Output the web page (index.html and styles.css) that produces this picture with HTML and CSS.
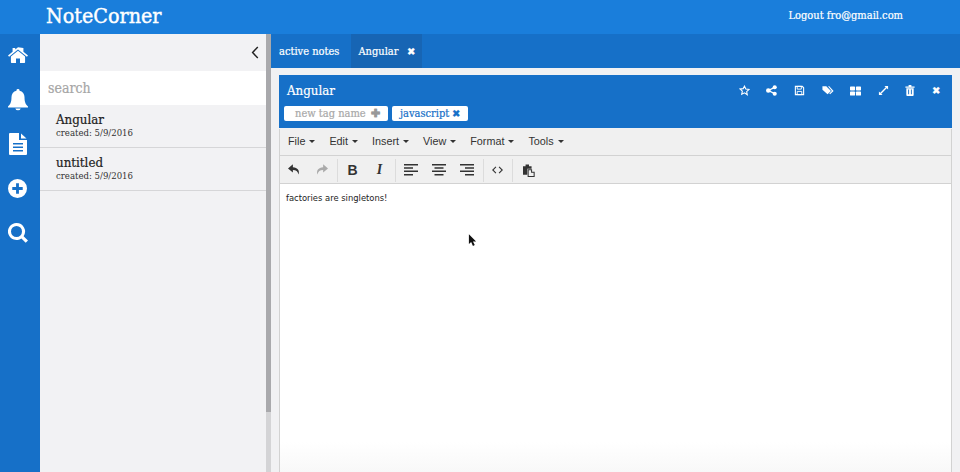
FILE: index.html
```html
<!DOCTYPE html>
<html lang="en">
<head>
    <meta charset="UTF-8" />
    <title>NoteCorner</title>
    <link rel="stylesheet" href="styles.css">
</head>
<body>
    <header class="topbar">
        <h1 class="brand">NoteCorner</h1>
        <div class="account">Logout fro@gmail.com</div>
    </header>

    <div class="main">
        <nav class="sidenav">
            <span class="nav-slot"><svg viewBox="0 0 24 20" width="20" height="17"><path d="M12 4.200 3.500 11.200V18.200c0 .5.400.8.800.8H9.600v-5.400h4.800V19h5.300c.4 0 .8-.3.800-.8V11.200z"/><path d="M12 0 8.700 2.700V.9H5.500v4.500L0 10l1.300 1.500L12 2.700l10.700 8.800L24 10l-5.500-4.600V.9h-.1z"/></svg></span>
            <span class="nav-slot"><svg viewBox="0 0 20 22" width="20" height="22"><path d="M10 0a1.500 1.500 0 0 0-1.500 1.700C5.300 2.400 3.500 5 3.500 8c0 6-1.500 7.500-3.500 9.500V18.500h20v-1C18 15.500 16.500 14 16.500 8c0-3-1.800-5.600-5-6.300A1.500 1.500 0 0 0 10 0z"/><path d="M7.300 19.500a2.800 2.500 0 0 0 5.400 0z"/></svg></span>
            <span class="nav-slot"><svg viewBox="0 0 18 22" width="18" height="22"><path fill-rule="evenodd" d="M1 0h9v7h8v14a1 1 0 0 1-1 1H1a1 1 0 0 1-1-1V1a1 1 0 0 1 1-1zM4 10v1.500h10V10zM4 13.500V15h10v-1.500zM4 17v1.500h10V17z"/><path d="M12 0.500 17.500 5.500H12z"/></svg></span>
            <span class="nav-slot"><svg viewBox="0 0 20 20" width="19" height="19"><path fill-rule="evenodd" d="M10 0a10 10 0 1 0 0 20a10 10 0 0 0 0-20zM8.500 4.500h3v4h4v3h-4v4h-3v-4h-4v-3h4z"/></svg></span>
            <span class="nav-slot"><svg viewBox="0 0 20 20" width="20" height="20"><path fill-rule="evenodd" d="M8.500 0a8.500 8.500 0 1 0 4.900 15.400L17.700 19.800 20 17.500l-4.400-4.300A8.500 8.500 0 0 0 8.500 0zM8.500 3a5.500 5.500 0 1 1 0 11a5.500 5.500 0 0 1 0-11z"/></svg></span>
        </nav>

        <aside class="notes-panel">
            <div class="panel-head">
                <svg viewBox="0 0 10 16" width="8" height="13"><path d="M8.500 1 2 8l6.500 7" fill="none" stroke="#222" stroke-width="1.800"/></svg>
            </div>
            <div class="search">search</div>
            <div class="note-item">
                <div class="note-title">Angular</div>
                <div class="note-date">created: 5/9/2016</div>
            </div>
            <div class="note-item">
                <div class="note-title">untitled</div>
                <div class="note-date">created: 5/9/2016</div>
            </div>
        </aside>
        <div class="scroll-track"><div class="scroll-thumb"></div></div>

        <section class="workspace">
            <div class="tabs">
                <div class="tab">active notes</div>
                <div class="tab tab-active">Angular <span class="tab-x">✖</span></div>
            </div>
            <div class="content">
                <article class="note">
                    <div class="note-head">
                        <div class="note-head-top">
                            <h2 class="note-name">Angular</h2>
                            <div class="note-actions">
                                <svg viewBox="0 0 24 24" width="11" height="11"><path d="M12 2.500l2.900 6.400 6.900.8-5.100 4.700 1.400 6.900L12 17l-6.100 3.300 1.400-6.900-5.100-4.700 6.900-.8z" fill="none" stroke="#fff" stroke-width="2.400"/></svg>
                                <svg viewBox="0 0 24 24" width="11" height="11"><circle cx="19" cy="5" r="4.500"/><circle cx="19" cy="19" r="4.500"/><circle cx="5" cy="12" r="5"/><path d="M5 12 19 5M5 12l14 7" stroke="#fff" stroke-width="3"/></svg>
                                <svg viewBox="0 0 24 24" width="11" height="11"><path d="M3 3h15l3 3v15H3z" fill="none" stroke="#fff" stroke-width="2.400"/><path d="M7 3h9v6H7zM7 14h10v7H7z" fill="none" stroke="#fff" stroke-width="2"/></svg>
                                <svg viewBox="0 0 28 24" width="12" height="11"><path d="M1 2h9l11 11-8 8L1 10z"/><path d="M14 2h3l10 11-8 8-2-2 6-6z"/></svg>
                                <svg viewBox="0 0 24 20" width="11" height="10"><rect x="0" y="0" width="11" height="9" rx="1.500"/><rect x="13" y="0" width="11" height="9" rx="1.500"/><rect x="0" y="11" width="11" height="9" rx="1.500"/><rect x="13" y="11" width="11" height="9" rx="1.500"/></svg>
                                <svg viewBox="0 0 24 24" width="11" height="11"><path d="M14 2h8v8zM2 14v8h8z"/><path d="M19 5 5 19" stroke="#fff" stroke-width="3"/></svg>
                                <svg viewBox="0 0 20 24" width="10" height="11"><path d="M0 3h20v3H0zM7 0h6v3H7z"/><path fill-rule="evenodd" d="M2 7h16v15a2 2 0 0 1-2 2H4a2 2 0 0 1-2-2zM6 10v10h2V10zM12 10v10h2V10z"/></svg>
                                <span class="act-x">✖</span>
                            </div>
                        </div>
                        <div class="tags">
                            <span class="tag tag-new">new tag name <b class="tag-plus">✚</b></span>
                            <span class="tag tag-js">javascript <span class="tag-x">✖</span></span>
                        </div>
                    </div>

                    <div class="menubar">
                        <span class="menu">File</span>
                        <span class="menu">Edit</span>
                        <span class="menu">Insert</span>
                        <span class="menu">View</span>
                        <span class="menu">Format</span>
                        <span class="menu">Tools</span>
                    </div>

                    <div class="toolbar">
                        <div class="tool-group">
                            <svg class="tool" viewBox="0 0 16 14" width="13" height="12"><path d="M6 0 0 5l6 5V7c4 0 6 1.500 7 5.500 1.500-5-1-8.500-7-9z"/></svg>
                            <svg class="tool tool-off" viewBox="0 0 16 14" width="13" height="12"><path d="M10 0l6 5-6 5V7c-4 0-6 1.500-7 5.500-1.500-5 1-8.500 7-9z"/></svg>
                        </div>
                        <div class="tool-group">
                            <span class="tool-text tool-b">B</span>
                            <span class="tool-text tool-i">I</span>
                        </div>
                        <div class="tool-group">
                            <svg class="tool" viewBox="0 0 14 12" width="14" height="12"><path d="M0 0h14v1.500H0zM0 3.300h9v1.500H0zM0 6.600h14v1.500H0zM0 9.900h9v1.500H0z"/></svg>
                            <svg class="tool" viewBox="0 0 14 12" width="14" height="12"><path d="M0 0h14v1.500H0zM2.500 3.300h9v1.500h-9zM0 6.600h14v1.500H0zM2.500 9.900h9v1.500h-9z"/></svg>
                            <svg class="tool" viewBox="0 0 14 12" width="14" height="12"><path d="M0 0h14v1.500H0zM5 3.300h9v1.500H5zM0 6.600h14v1.500H0zM5 9.900h9v1.500H5z"/></svg>
                        </div>
                        <div class="tool-group">
                            <svg class="tool" viewBox="0 0 14 10" width="11" height="8"><path d="M5 1 1 5l4 4M9 1l4 4-4 4" fill="none" stroke="#333" stroke-width="1.400"/></svg>
                        </div>
                        <div class="tool-group tool-last">
                            <svg class="tool" viewBox="0 0 14 14" width="12" height="13"><path d="M0 2h3V0h4v2h3v3H5v7H0z"/><path d="M6 6h4v3h3v5H6z" fill="none" stroke="#333" stroke-width="1.200"/></svg>
                        </div>
                    </div>

                    <div class="editor">
                        <p class="editor-text">factories are singletons!</p>
                        <svg class="cursor" viewBox="0 0 10 14" width="9" height="13"><path d="M1 0v11l2.500-2.300L5.500 13 7.500 12 5.500 8H9z" fill="#111"/></svg>
                    </div>
                </article>
            </div>
        </section>
    </div>
</body>
</html>
```

FILE: styles.css
```css
* {
    box-sizing: border-box;
}

html, body {
    height: 100%;
}

body {
    margin: 0;
    overflow: hidden;
    display: flex;
    flex-direction: column;
    font-family: "DejaVu Serif Condensed", "DejaVu Serif", serif;
    -webkit-text-stroke: 0.2px;
    background: #f1f1f3;
    color: #222;
}

.topbar {
    height: 34px;
    flex: none;
    background: #1a7edb;
    color: #fff;
    display: flex;
    align-items: center;
    justify-content: space-between;
    padding: 0 57px 4px 46px;
}

.brand {
    margin: 0;
    font-size: 21.300px;
    font-weight: normal;
    -webkit-text-stroke: 0.4px;
}

.account {
    font-size: 11px;
}

.main {
    flex: 1;
    display: flex;
    min-height: 0;
}

.sidenav {
    width: 40px;
    flex: none;
    background: #1670c8;
    padding-right: 5px;
    fill: #fff;
}

.nav-slot {
    height: 44.500px;
    display: flex;
    align-items: center;
    justify-content: center;
    position: relative;
    top: -1px;
}

.notes-panel {
    width: 226px;
    flex: none;
    background: #f2f2f4;
}

.panel-head {
    height: 37px;
    display: flex;
    align-items: center;
    justify-content: flex-end;
    padding: 0 7px 0 0;
}

.search {
    height: 34px;
    background: #fff;
    color: #a6a6a6;
    font-size: 14px;
    line-height: 35px;
    padding-left: 8px;
}

.note-item {
    height: 43px;
    padding: 7px 0 0 16px;
    border-bottom: 1px solid #d6d6d8;
}

.note-title {
    font-size: 13.200px;
    line-height: 15px;
}

.note-date {
    font-size: 9.500px;
    line-height: 12px;
    color: #333;
    -webkit-text-stroke: 0;
}

.scroll-track {
    width: 5px;
    flex: none;
    background: #d4d4d6;
}

.scroll-thumb {
    height: 378px;
    background: #a9a9ac;
}

.workspace {
    flex: 1;
    display: flex;
    flex-direction: column;
    min-width: 0;
}

.tabs {
    height: 34px;
    flex: none;
    background: #1670c8;
    color: #fff;
    display: flex;
    font-size: 11px;
}

.tab {
    padding: 0 8px;
    line-height: 36px;
}

.tab-active {
    background: #1765b4;
    margin-left: 4px;
    padding-left: 7px;
    width: 71px;
    white-space: nowrap;
}

.tab-x {
    font-size: 10px;
    margin-left: 5px;
}

.content {
    flex: 1;
    min-height: 0;
    padding: 7px 8px 0;
}

.note {
    height: 100%;
    display: flex;
    flex-direction: column;
}

.note-head {
    height: 53px;
    flex: none;
    background: #1670c8;
    color: #fff;
    padding: 0 5px;
}

.note-head-top {
    height: 31px;
    display: flex;
    align-items: center;
    justify-content: space-between;
}

.note-name {
    margin: 0 0 0 3px;
    font-size: 13.200px;
    font-weight: normal;
}

.note-actions {
    display: flex;
    align-items: center;
    gap: 16.600px;
    padding-right: 7px;
    fill: #fff;
}

.act-x {
    font-size: 10px;
}

.tags {
    display: flex;
    gap: 4px;
}

.tag {
    height: 15px;
    line-height: 15px;
    background: #fff;
    border-radius: 2px;
    font-size: 11px;
    padding: 0 5px;
}

.tag-new {
    color: #a8a8a8;
    padding-left: 11px;
    width: 104px;
    white-space: nowrap;
}

.tag-plus {
    color: #999;
    font-size: 11px;
    margin-left: 2px;
}

.tag-js {
    color: #1670c8;
    padding: 0 8px;
}

.tag-x {
    font-size: 10px;
}

.menubar {
    height: 27px;
    flex: none;
    margin-top: 1px;
    padding: 0 0 2px 8px;
    background: #f0f0f0;
    border: solid #d2d2d2;
    border-width: 0 1px 1px;
    display: flex;
    align-items: center;
    gap: 14px;
    font-family: "Liberation Sans", Arial, sans-serif;
    -webkit-text-stroke: 0;
    font-size: 10.800px;
    color: #333;
}

.menu::after {
    content: "";
    display: inline-block;
    margin-left: 4px;
    vertical-align: 2px;
    border: 3px solid transparent;
    border-top-color: #333;
    border-bottom-width: 0;
}

.toolbar {
    height: 28px;
    flex: none;
    padding-top: 1px;
    background: #f0f0f0;
    border: solid #d2d2d2;
    border-width: 0 1px 1px;
    display: flex;
    align-items: center;
    fill: #333;
}

.tool-group {
    display: flex;
    align-items: center;
    gap: 14px;
    height: 23px;
    padding: 0 9px 0 8px;
    border-right: 1px solid #dcdcdc;
}

.tool-last {
    border-right: none;
    padding-left: 10px;
}

.tool-off {
    fill: #aaa;
}

.tool-text {
    width: 13px;
    text-align: center;
    font-size: 14px;
    color: #333;
    font-family: "Liberation Serif", serif;
    -webkit-text-stroke: 0;
}

.tool-b {
    font-family: "Liberation Sans", sans-serif;
    font-weight: bold;
}

.tool-i {
    font-style: italic;
    font-weight: bold;
}

.editor {
    flex: 1;
    position: relative;
    background: linear-gradient(#fff calc(100% - 30px), #f8f8f8);
    border: solid #d2d2d2;
    border-width: 0 1px;
}

.editor-text {
    margin: 9px 0 0 6px;
    font-family: "DejaVu Sans", sans-serif;
    -webkit-text-stroke: 0;
    font-size: 8.400px;
    color: #222;
}

.cursor {
    position: absolute;
    left: 188px;
    top: 50px;
}
```
